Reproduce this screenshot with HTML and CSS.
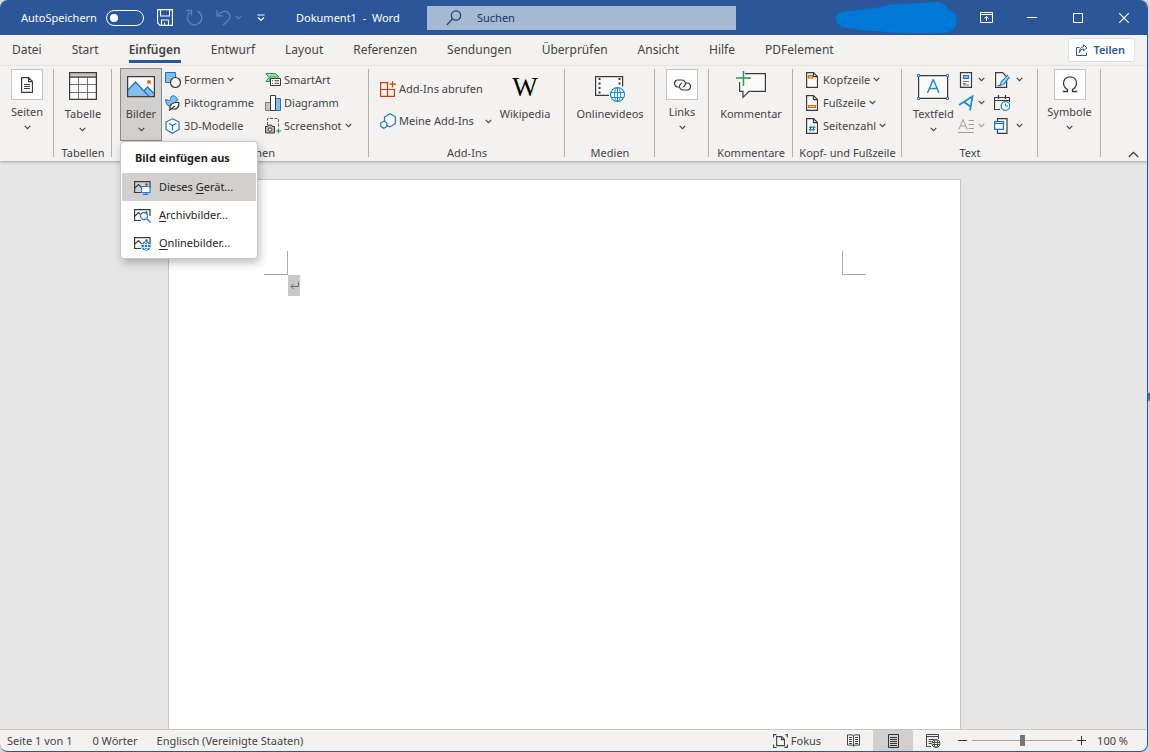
FILE: index.html
```html
<!DOCTYPE html>
<html lang="de">
<head>
<meta charset="utf-8">
<title>Dokument1 - Word</title>
<link rel="stylesheet" href="styles.css">
</head>
<body>
<svg class="defs" aria-hidden="true">
  <symbol id="chev" viewBox="0 0 7 5"><path d="M.7 .9 3.500 3.600 6.300 .9" fill="none" stroke="currentColor" stroke-width="1.200"/></symbol>
  <symbol id="doc" viewBox="0 0 12 16"><path d="M.6 .6h6.900l4 4v10.800H.6z" fill="#fafafa" stroke="#3b3a39" stroke-width="1.200"/><path d="M7.500 .6v4h4" fill="none" stroke="#3b3a39" stroke-width="1.200"/></symbol>
  <symbol id="thumb" viewBox="0 0 17 15"><path d="M7 12.500H.6V1.600h15.400V8" fill="none" stroke="#3b3a39" stroke-width="1.200"/><path d="M.8 8 4.500 4.500 7.500 7.500" fill="none" stroke="#3b3a39" stroke-width="1.200"/><path d="M11.500 3.500h2v2h-2z" fill="#3b3a39"/></symbol>
</svg>
<div class="window">
  <header class="titlebar">
    <div class="quick">
      <label class="autosave" for="autosave">AutoSpeichern</label>
      <input class="switch" id="autosave" type="checkbox" role="switch">
      <button class="bare save" aria-label="Speichern"><svg width="16" height="17" viewBox="0 0 16 17" fill="none" stroke="#fff" stroke-width="1.100"><path d="M.6 .6h14.800v15.800H3L.6 14z"/><path d="M3.500 .6v6.400h9V.6M4.500 16v-5h7v5M7.500 16v-2.500"/></svg></button>
      <button class="bare redo" aria-label="Wiederholen"><svg width="17" height="17" viewBox="0 0 17 17" fill="none" stroke="#5f83bd" stroke-width="1.300"><path d="M11.500 2.200a7.200 7.200 0 1 1-7.500 1"/><path d="M.5 1.500h5v5"/></svg></button>
      <button class="bare undo" aria-label="Rückgängig"><svg width="15" height="17" viewBox="0 0 15 17" fill="none" stroke="#5f83bd" stroke-width="1.300"><path d="M1 .8v6h6"/><path d="M1.500 6.500C5 2 9.500 1.500 12 3.500c3 2.500 2.500 6 0 8L7 16.300"/></svg><svg class="pale" width="7" height="5"><use href="#chev"/></svg></button>
      <button class="bare custom" aria-label="Schnellzugriff anpassen"><svg width="8" height="8" viewBox="0 0 8 8" fill="none" stroke="#fff" stroke-width="1.200"><path d="M.5 1h7M1 3.500l3 3 3-3"/></svg></button>
      <span class="doctitle">Dokument1&nbsp; -&nbsp; Word</span>
    </div>
    <label class="search"><svg width="16" height="16" viewBox="0 0 16 16" fill="none" stroke="#1f3f7a" stroke-width="1.200"><circle cx="10" cy="5.500" r="4.700"/><path d="M6.500 9 .8 15"/></svg><input type="text" placeholder="Suchen" aria-label="Suchen"></label>
    <div class="account">
      <svg class="blob" width="124" height="32" viewBox="0 0 124 32"><path d="M8 10Q22 8 42 6 54 2 72 2L98 0Q112-1 114 8 123 10 123 18 122 31 108 31H78Q55 31 45 29 24 29 19 26C2 28-4 14 8 10Z" fill="#0078d7"/></svg>
      <div class="sys">
        <button class="bare" aria-label="Menüband-Anzeigeoptionen"><svg width="13" height="11" viewBox="0 0 13 11" fill="none" stroke="#fff"><path d="M.5 .5h12v10H.5zM.5 2.500h12M6.500 9V4.500M4.500 6.500l2-2 2 2"/></svg></button>
        <button class="bare" aria-label="Minimieren"><svg width="10" height="10" viewBox="0 0 10 10" stroke="#fff"><path d="M0 4.500h10"/></svg></button>
        <button class="bare" aria-label="Maximieren"><svg width="10" height="10" viewBox="0 0 10 10" stroke="#fff" fill="none"><path d="M.5 .5h9v9h-9z"/></svg></button>
        <button class="bare" aria-label="Schließen"><svg width="10" height="10" viewBox="0 0 10 10" stroke="#fff" stroke-width="1.100"><path d="M.3 .3l9.400 9.400M9.700 .3.3 9.700"/></svg></button>
      </div>
    </div>
  </header>

  <nav class="tabs">
    <button class="tab">Datei</button><button class="tab">Start</button><button class="tab active">Einfügen</button><button class="tab">Entwurf</button><button class="tab">Layout</button><button class="tab">Referenzen</button><button class="tab">Sendungen</button><button class="tab">Überprüfen</button><button class="tab">Ansicht</button><button class="tab">Hilfe</button><button class="tab">PDFelement</button>
    <button class="share"><svg width="12" height="12" viewBox="0 0 12 12" fill="none" stroke="#2b579a"><path d="M3.500 3.500H.5v8h10v-3"/><path d="M7.500 .8l3.500 3-3.500 3V5C5 5 4 6.500 3.500 8.500 3.300 5 5 2.800 7.500 2.800z"/></svg>Teilen</button>
  </nav>

  <section class="ribbon">
    <div class="group g-pages">
      <div class="tools">
        <button class="big boxed"><span class="box"><svg width="12" height="16" viewBox="0 0 12 16" fill="none" stroke="#3b3a39" stroke-width="1.200"><path d="M.6 .6h6.900l4 4v10.800H.6zM7.500 .6v4h4M3 7.500h6M3 9.500h6M3 11.500h6"/></svg></span>Seiten<svg class="chev" width="7" height="5"><use href="#chev"/></svg></button>
      </div>
    </div>
    <div class="group g-tables">
      <div class="tools">
        <button class="big"><svg class="pic" width="28" height="28" viewBox="0 0 28 28"><path d="M.5 .5h27v27H.5z" fill="#fafafa"/><path d="M1 1h26v4H1z" fill="#c8c6c4"/><path d="M1 12.500h26M1 20.500h26M9.500 5v22M18.500 5v22" stroke="#797775"/><path d="M.6 .6h26.800v26.800H.6zM1 5.200h26" fill="none" stroke="#3b3a39" stroke-width="1.200"/></svg>Tabelle<svg class="chev" width="7" height="5"><use href="#chev"/></svg></button>
      </div>
      <div class="caption">Tabellen</div>
    </div>
    <div class="group g-illus">
      <div class="tools">
        <div class="dropdown">
          <button class="big pressed" aria-expanded="true"><svg class="pic" width="28" height="28" viewBox="0 0 28 28"><path d="M.6 4.600h26.800v20H.6z" fill="#fafafa"/><path d="M1 18l7.500-8L17 19l3-4 7 7v2.500H1z" fill="#83beec"/><path d="M1 18 8.500 10 22 24.500M17 19l3.500-4L27 21.500" fill="none" stroke="#1e74bd" stroke-width="1.200"/><path d="M.6 4.600h26.800v20H.6z" fill="none" stroke="#3b3a39" stroke-width="1.200"/><circle cx="22" cy="10" r="2" fill="#e06c00"/></svg>Bilder<svg class="chev" width="7" height="5"><use href="#chev"/></svg></button>
          <div class="menu" role="menu">
            <div class="menu-title">Bild einfügen aus</div>
            <button class="item hover" role="menuitem"><svg width="17" height="15" viewBox="0 0 17 15"><use href="#thumb" width="17" height="15"/><path d="M7.500 6.500h8.500v6H7.500z" fill="#fff" stroke="#1e7fd0" stroke-width="1.200"/><path d="M11.700 12.500v2M9 14.400h5.500" stroke="#1e7fd0" stroke-width="1.200"/></svg><span>Dieses <u>G</u>erät...</span></button>
            <button class="item" role="menuitem"><svg width="17" height="15" viewBox="0 0 17 15"><use href="#thumb" width="17" height="15"/><circle cx="10" cy="8" r="3.500" fill="#fff" stroke="#1e7fd0" stroke-width="1.300"/><path d="M12.500 10.500l4 4" stroke="#1e7fd0" stroke-width="1.400"/></svg><span><u>A</u>rchivbilder...</span></button>
            <button class="item" role="menuitem"><svg width="17" height="15" viewBox="0 0 17 15"><use href="#thumb" width="17" height="15"/><circle cx="12" cy="10" r="4.700" fill="#1e7fd0"/><path d="M8 8.500h8M8 11.500h8" stroke="#fff" stroke-width=".8"/><ellipse cx="12" cy="10" rx="1.700" ry="4" fill="none" stroke="#fff" stroke-width=".8"/></svg><span><u>O</u>nlinebilder...</span></button>
          </div>
        </div>
        <div class="stack">
          <button class="small"><svg width="16" height="16" viewBox="0 0 16 16"><path d="M.5 .5h10v10H.5z" fill="#83beec" stroke="#1e74bd"/><circle cx="10.500" cy="10.500" r="5" fill="#fafafa" stroke="#3b3a39" stroke-width="1.200"/></svg>Formen<svg class="chev" width="7" height="5"><use href="#chev"/></svg></button>
          <button class="small"><svg width="16" height="16" viewBox="0 0 16 16"><path d="M.6 4.500 4 5.500C5.500 5.500 6 4 5.500 3 6 1 8 .4 9.500 1c1.500.5 2 1.700 1.800 2.700l1.900 1-2 .9C11 8 9.500 9 7 9L4 11C2 10.500 .8 8 .6 4.500z" fill="#83beec" stroke="#1e74bd"/><path d="M5 14c-1-4.500 3-7 8.800-6.500C14.500 12 11.500 15.500 6.500 13.500M4 15.500l6-4.500" fill="#fafafa" stroke="#3b3a39" stroke-width="1.200"/></svg>Piktogramme</button>
          <button class="small"><svg width="16" height="16" viewBox="0 0 16 16" fill="#fff" stroke="#1e74bd" stroke-width="1.200"><path d="M7.500 .8 14 4v7.500l-6.500 3.700L1 11.500V4z"/><path d="M4 5.500 7.500 7.500 11.500 5.300M7.500 7.500v5" fill="none"/></svg>3D-Modelle</button>
        </div>
        <div class="stack stack-b">
          <button class="small"><svg width="16" height="16" viewBox="0 0 16 16"><path d="M.8 1.500h9.700L14 5H5v4.500H.8L4 5.500z" fill="#9fd8ac" stroke="#259b48"/><path d="M5.500 6.500h10v7h-10z" fill="#fff" stroke="#3b3a39"/><path d="M7 8.800h1M9.500 8.800h4.500M7 11.300h1M9.500 11.300h4.500" stroke="#3b3a39"/></svg>SmartArt</button>
          <button class="small"><svg width="16" height="16" viewBox="0 0 16 16"><path d="M.5 7.500h5v8h-5z" fill="#c8c6c4" stroke="#797775"/><path d="M10.500 3.500h5v12h-5z" fill="#83beec" stroke="#1e74bd"/><path d="M5.500 .5h5v15h-5z" fill="#fff" stroke="#3b3a39"/></svg>Diagramm</button>
          <button class="small"><svg width="16" height="16" viewBox="0 0 16 16"><path d="M2.500 7V.5h11v9" fill="none" stroke="#605e5c" stroke-dasharray="3 1.500"/><path d="M.5 8.500h2l1-1.500h3l1 1.500h2v6.500h-9z" fill="#b5b3b1" stroke="#3b3a39"/><circle cx="5" cy="11.600" r="1.700" fill="#fff" stroke="#3b3a39"/><path d="M13.500 10.500v5M11 13h5" stroke="#259b48" stroke-width="1.200"/></svg>Screenshot<svg class="chev" width="7" height="5"><use href="#chev"/></svg></button>
        </div>
      </div>
      <div class="caption">Illustrationen</div>
    </div>
    <div class="group g-addins">
      <div class="tools">
        <div class="stack tall">
          <button class="small"><svg width="16" height="16" viewBox="0 0 16 16" fill="none" stroke="#d83b01" stroke-width="1.200"><path d="M8.500 1.600H.6v13.800h13.800V8.500H.6M7.500 1.600v13.800M12.500 .2v6M9.500 3.200h6.500"/></svg>Add-Ins abrufen</button>
          <button class="small"><svg width="16" height="16" viewBox="0 0 16 16" fill="#fafafa" stroke="#1e74bd" stroke-width="1.200"><path d="M4.500 8V4L10 .8l5.300 3v6.900l-5.500 3.200L7 12.500"/><path d="M3.800 8.300l3 1.500v3.700l-3 1.700-3-1.700V9.800z"/></svg>Meine Add-Ins<svg class="chev far" width="7" height="5"><use href="#chev"/></svg></button>
        </div>
        <button class="big wiki"><span class="w pic">W</span>Wikipedia</button>
      </div>
      <div class="caption">Add-Ins</div>
    </div>
    <div class="group g-media">
      <div class="tools">
        <button class="big"><svg class="pic" width="30" height="28" viewBox="0 0 30 28"><path d="M.6 4.600h27v19H.6z" fill="#fafafa"/><path d="M14 23.400H.6V4.600h27v10" fill="none" stroke="#3b3a39" stroke-width="1.200"/><path d="M4.500 6v17M24.500 6v8" stroke="#3b3a39" stroke-width="2" stroke-dasharray="2 2.500"/><circle cx="22.500" cy="22.500" r="7" fill="#fff" stroke="#1e8ad6" stroke-width="1.200"/><ellipse cx="22.500" cy="22.500" rx="3" ry="7" fill="none" stroke="#1e8ad6"/><path d="M16 20.500h13M16 25.500h13M22.500 15.500v14" stroke="#1e8ad6"/></svg>Onlinevideos</button>
      </div>
      <div class="caption">Medien</div>
    </div>
    <div class="group g-links">
      <div class="tools">
        <button class="big boxed"><span class="box"><svg width="17" height="12" viewBox="0 0 17 12" fill="none" stroke="#3b3a39" stroke-width="1.200"><path d="M5.500 8H4a3.500 3.500 0 0 1 0-7H8a3.500 3.500 0 0 1 3 5.200Q10 8 8.500 8"/><path d="M11.500 4H13a3.500 3.500 0 0 1 0 7H9a3.500 3.500 0 0 1-3-5.200Q7 4 8.500 4"/></svg></span>Links<svg class="chev" width="7" height="5"><use href="#chev"/></svg></button>
      </div>
    </div>
    <div class="group g-comments">
      <div class="tools">
        <button class="big"><svg class="pic" width="32" height="28" viewBox="0 0 32 28"><path d="M4.600 10V19.400H8v6l6-6h16.400V1.600H10" fill="#fafafa" stroke="#3b3a39" stroke-width="1.200"/><path d="M8.500-1v15M1 6h15" stroke="#259b48" stroke-width="1.500"/></svg>Kommentar</button>
      </div>
      <div class="caption">Kommentare</div>
    </div>
    <div class="group g-header">
      <div class="tools">
        <div class="stack">
          <button class="small"><svg class="sheet" width="12" height="16" viewBox="0 0 12 16"><use href="#doc"/><path d="M2.500 3.500h4v2.500h-4z" fill="#fbd3a5" stroke="#e06c00" stroke-width="1.200"/></svg>Kopfzeile<svg class="chev" width="7" height="5"><use href="#chev"/></svg></button>
          <button class="small"><svg class="sheet" width="12" height="16" viewBox="0 0 12 16"><use href="#doc"/><path d="M2.500 10.500h7v2h-7z" fill="#fbd3a5" stroke="#e06c00" stroke-width="1.200"/></svg>Fußzeile<svg class="chev" width="7" height="5"><use href="#chev"/></svg></button>
          <button class="small"><svg class="sheet" width="12" height="16" viewBox="0 0 12 16"><use href="#doc"/><path d="M5 7.500 4 13.500M8 7.500l-1 6M3 9.300h6.500M2.700 11.700h6.500" stroke="#1e74bd"/></svg>Seitenzahl<svg class="chev" width="7" height="5"><use href="#chev"/></svg></button>
        </div>
      </div>
      <div class="caption">Kopf- und Fußzeile</div>
    </div>
    <div class="group g-text">
      <div class="tools">
        <button class="big"><svg class="pic" width="32" height="28" viewBox="0 0 32 28"><path d="M1.600 3.600h29v22.800h-29z" fill="#fafafa" stroke="#3b3a39" stroke-width="1.200"/><path d="M10.500 21 16 8h.5L22 21M12.500 16.500h7.500" fill="none" stroke="#1e8ad6" stroke-width="1.500"/><path d="M.5 2.500h2v2h-2zM29.500 2.500h2v2h-2zM.5 25.500h2v2h-2zM29.500 25.500h2v2h-2z" fill="#fff" stroke="#1e74bd"/></svg>Textfeld<svg class="chev" width="7" height="5"><use href="#chev"/></svg></button>
        <div class="stack icons">
          <button class="small" aria-label="Schnellbausteine"><svg width="16" height="16" viewBox="0 0 16 16"><path d="M2.500 .6h11v14.800h-11z" fill="#fafafa" stroke="#3b3a39" stroke-width="1.200"/><path d="M5.500 3.500h5v3h-5z" fill="#83beec" stroke="#1e74bd" stroke-width="1.200"/><path d="M5 9.500h6M5 11.500h3M5 13h6" stroke="#797775"/></svg><svg class="chev" width="7" height="5"><use href="#chev"/></svg></button>
          <button class="small" aria-label="WordArt"><svg width="16" height="16" viewBox="0 0 16 16" fill="none" stroke="#1e8ad6" stroke-width="1.700"><path d="M1 10 14.500 1.300 12 15.500M6 7l6.500 4.500"/></svg><svg class="chev" width="7" height="5"><use href="#chev"/></svg></button>
          <button class="small off" aria-label="Initiale" disabled><svg width="16" height="16" viewBox="0 0 16 16" fill="none" stroke="#a19f9d"><path d="M.8 11.500 5 1.500l4.200 10M2.500 8h5M10.500 2.500H16M10.500 6.500H16M10.500 10.500H16M0 14.500h16"/></svg><svg class="chev" width="7" height="5"><use href="#chev"/></svg></button>
        </div>
        <div class="stack icons">
          <button class="small" aria-label="Signaturzeile"><svg width="16" height="16" viewBox="0 0 16 16"><path d="M1.600 .6h7l4 4v10.800h-11z" fill="#fafafa" stroke="#3b3a39" stroke-width="1.200"/><path d="M14 3 7.500 9.500 6 13.500l4-1.500L15.500 5" fill="#b8dcf5" stroke="#1e8ad6" stroke-width="1.300"/><path d="M3.500 13.500h3" stroke="#1e74bd"/></svg><svg class="chev" width="7" height="5"><use href="#chev"/></svg></button>
          <button class="small" aria-label="Datum und Uhrzeit"><svg width="16" height="16" viewBox="0 0 16 16"><path d="M6 14.500H.5v-12h15V7M.5 5.500h15M4.500 0v4M11.500 0v4" fill="none" stroke="#3b3a39" stroke-width="1.200"/><circle cx="11.500" cy="11" r="4.300" fill="#fff" stroke="#1e8ad6" stroke-width="1.300"/><path d="M11.500 8.500V11h2.500" fill="none" stroke="#1e74bd"/></svg></button>
          <button class="small" aria-label="Objekt"><svg width="16" height="16" viewBox="0 0 16 16"><path d="M3.500 3V.6h9.500v14.800H3.500V12" fill="#fafafa" stroke="#3b3a39" stroke-width="1.200"/><path d="M.6 3.600h8.800v7.800H.6z" fill="#fff" stroke="#1e74bd" stroke-width="1.300"/><path d="M1 5.500h8" stroke="#1e74bd"/></svg><svg class="chev" width="7" height="5"><use href="#chev"/></svg></button>
        </div>
      </div>
      <div class="caption">Text</div>
    </div>
    <div class="group g-symbols">
      <div class="tools">
        <button class="big boxed"><span class="box"><svg width="16" height="17" viewBox="0 0 16 17" fill="none" stroke="#3b3a39" stroke-width="1.300"><path d="M.8 15.500h4.700v-2C3 12 1.500 10 1.500 7.200 1.500 3 4.500 .8 8 .8s6.500 2.200 6.500 6.400c0 2.800-1.500 4.800-4 6.300v2h4.700"/></svg></span>Symbole<svg class="chev" width="7" height="5"><use href="#chev"/></svg></button>
      </div>
    </div>
    <button class="bare collapse" aria-label="Menüband reduzieren"><svg width="11" height="7" viewBox="0 0 11 7" fill="none" stroke="#3b3a39" stroke-width="1.200"><path d="M.8 6 5.500 1.300 10.200 6"/></svg></button>
  </section>

  <main class="canvas">
    <article class="page">
      <div class="corners"><span class="corner left"></span><span class="corner right"></span></div>
      <p class="para"><span class="mark"><svg width="9" height="8" viewBox="0 0 9 8" fill="none" stroke="#6e6e6e"><path d="M8.500 0v4.500H1M3.500 2 1 4.500 3.500 7"/></svg></span></p>
    </article>
  </main>

  <footer class="status">
    <span class="st-page">Seite 1 von 1</span><span class="st-words">0 Wörter</span><span>Englisch (Vereinigte Staaten)</span>
    <div class="views">
      <button class="bare focus"><svg width="15" height="14" viewBox="0 0 15 14" fill="none" stroke="#444" stroke-width="1.100"><path d="M3.500 .6H.6v3M.6 10.500v3h2.900M11.500 13.400h2.900v-3M14.400 3.500V.6h-2"/><path d="M3.600 2.600h4.900l3 3v6H3.600zM8.500 2.600v3h3"/></svg>Fokus</button>
      <button class="bare view" aria-label="Lesemodus"><svg width="13" height="13" viewBox="0 0 13 13" fill="none" stroke="#444"><path d="M6.500 2 5.500 .9H.5v10.200h5l1 1.200 1-1.200h5V.9h-5zv10M2 3.500h3M2 5.500h3M2 7.500h3M8 3.500h3M8 5.500h3M8 7.500h3M2 9.500h3M8 9.500h3"/></svg></button>
      <button class="bare view current" aria-label="Seitenlayout"><svg width="11" height="14" viewBox="0 0 11 14" fill="none" stroke="#333"><path d="M.5 .5h10v13H.5zM2 3.500h7M2 5.500h7M2 7.500h7M2 9.500h7M2 11.500h7"/></svg></button>
      <button class="bare view" aria-label="Weblayout"><svg width="15" height="14" viewBox="0 0 15 14" fill="none" stroke="#444"><path d="M5 12.500H.5V.5h12V5M.5 2.500h12M2.500 5.500h6M2.500 7.500h3M2.500 9.500h3"/><circle cx="10" cy="9.500" r="4" fill="#fff"/><ellipse cx="10" cy="9.500" rx="1.700" ry="4"/><path d="M6 8.500h8M6 10.500h8"/></svg></button>
      <button class="bare step" aria-label="Verkleinern"><svg width="9" height="9" viewBox="0 0 9 9" stroke="#333"><path d="M0 4.500h9"/></svg></button>
      <input class="zoom" type="range" min="0" max="100" value="50" aria-label="Zoom">
      <button class="bare step" aria-label="Vergrößern"><svg width="9" height="9" viewBox="0 0 9 9" stroke="#333"><path d="M0 4.500h9M4.500 0v9"/></svg></button>
      <span class="percent">100 %</span>
    </div>
  </footer>
</div>
</body>
</html>
```
FILE: styles.css
```css
* { box-sizing: border-box; }
html, body { height: 100%; }
body {
  margin: 0;
  padding-right: 2px;
  background: linear-gradient(#0f6bd0, #2b88e8) right 0 top 393px / 2px 8px no-repeat, #d7d6dc;
  font: 11px/16px "Noto Sans", "Open Sans", sans-serif;
  color: #444;
}
button, input { font: inherit; color: inherit; }
button { padding: 0; border: 0; background: none; white-space: nowrap; }
svg { display: block; flex: none; }
.defs { position: absolute; width: 0; height: 0; }
.bare { display: flex; align-items: center; justify-content: center; }

.window {
  display: flex;
  flex-direction: column;
  height: 100%;
  overflow: hidden;
  border: solid #2b579a;
  border-width: 0 1px 1px 0;
  border-radius: 8px;
  background: #f3f2f1;
}

/* Title bar */
.titlebar { display: flex; height: 35px; flex: none; background: #2b579a; color: #fff; }
.quick { display: flex; align-items: center; width: 427px; padding-left: 21px; white-space: nowrap; }
.autosave { width: 85px; }
.switch {
  appearance: none;
  display: flex;
  align-items: center;
  width: 38px;
  height: 16px;
  margin: 0 13px 0 0;
  padding-left: 3px;
  border: 1px solid #fff;
  border-radius: 8px;
}
.switch::before { content: ""; width: 8px; height: 8px; border-radius: 50%; background: #fff; }
.save { margin-right: 13px; }
.redo { margin-right: 13px; }
.undo { gap: 4px; margin-right: 15px; }
.pale { color: #5f83bd; }
.custom { margin-right: 31px; }
.search { display: flex; align-items: center; gap: 15px; width: 309px; height: 24px; margin-top: 6px; padding-left: 19px; background: #a6b9d3; color: #16356e; }
.search input { flex: 1; min-width: 0; padding: 0; border: 0; outline: 0; background: none; }
.search input::placeholder { color: #16356e; opacity: 1; }
.account { display: flex; flex: 1; align-items: center; justify-content: flex-end; gap: 5px; }
.sys { display: flex; height: 100%; }
.sys button { width: 46px; }

/* Tabs */
.tabs { display: flex; flex: none; gap: 30px; height: 31px; padding: 0 12px; align-items: flex-start; font-size: 12px; }
.tab { height: 28px; padding-top: 4px; border-bottom: 3px solid transparent; }
.tab.active { border-color: #2b579a; font-weight: 600; }
.share { display: flex; align-items: center; gap: 5px; height: 24px; margin: 3px 0 0 auto; padding: 0 9px 0 7px; border: 1px solid #e1dfdd; border-radius: 2px; background: #fff; color: #2b579a; font-weight: 600; font-size: 11px; }

/* Ribbon */
.ribbon { position: relative; z-index: 1; display: flex; flex: none; padding-top: 2px; background: #f3f2f1; box-shadow: 0 1px 3px rgba(0, 0, 0, .3); }
.group { display: flex; flex: none; flex-direction: column; height: 93px; background: linear-gradient(#b3b0ad, #b3b0ad) right 0 top 1px / 1px 88px no-repeat; }
.tools { display: flex; justify-content: center; height: 77px; }
.caption { text-align: center; white-space: nowrap; }
.g-pages { width: 54px; }
.g-tables { width: 58px; }
.g-illus { width: 257px; }
.g-addins { width: 196px; }
.g-media { width: 90px; }
.g-links { width: 54px; }
.g-comments { width: 84px; }
.g-header { width: 109px; }
.g-text { width: 136px; }
.g-symbols { width: 63px; }
.g-illus .tools, .g-addins .tools, .g-header .tools, .g-text .tools { justify-content: flex-start; }
.g-illus .tools { padding-left: 8px; }
.g-addins .tools { padding-left: 11px; }
.g-header .tools { padding-left: 10px; }
.g-text .tools { padding-left: 11px; }

.big { display: flex; flex-direction: column; align-items: center; height: 73px; padding-top: 4px; }
.big .pic { margin-bottom: 6px; overflow: visible; }
.big .chev { margin-top: 5px; }
.boxed { padding-top: 1px; }
.box { display: flex; align-items: center; justify-content: center; width: 32px; height: 31px; margin-bottom: 4px; border: 1px solid #c8c6c4; background: #fff; }
.pressed { width: 42px; padding-top: 3px; border: 1px solid #8a8886; background: #d2d0ce; }
.w { height: 28px; font: 27px/30px "Liberation Serif", serif; color: #000; }
.wiki { margin-left: 8px; }

.stack { display: flex; flex-direction: column; margin-left: 3px; }
.stack-b { margin-left: 11px; }
.small { display: flex; align-items: center; gap: 3px; height: 23px; }
.tall { margin-left: 0; padding-top: 5px; }
.tall .small { height: 32px; }
.far { margin-left: 8px; }
.sheet { margin-right: 2px; }
.icons { margin-left: 4px; }
.icons .small { gap: 4px; }
.icons + .icons { margin-left: 9px; }
.icons + .icons .small { gap: 6px; }
.off { color: #a19f9d; }
.collapse { margin: auto 8px 3px auto; }

/* Menu below the picture button */
.dropdown { position: relative; }
.menu { position: absolute; top: 73px; left: 0; width: 138px; padding: 0 1px 1px; border: 1px solid #c8c6c4; border-radius: 4px; background: #fff; box-shadow: 2px 4px 8px rgba(0, 0, 0, .25); color: #252423; }
.menu-title { padding: 8px 13px 7px; font-weight: 700; white-space: nowrap; }
.item { display: flex; align-items: center; gap: 8px; width: 100%; height: 28px; padding-left: 12px; }
.item.hover { background: #d2d0ce; }
.item u { text-underline-offset: 2px; }

/* Document */
.canvas { display: flex; flex: 1; min-height: 0; justify-content: center; padding: 18px 18px 0 0; background: #e6e6e6; }
.page { width: 793px; padding: 71px 94px 0 95px; border: 1px solid #c6c6c6; border-bottom: 0; background: #fff; }
.corners { display: flex; justify-content: space-between; }
.corner { width: 24px; height: 24px; border-bottom: 1px solid #ababab; }
.corner.left { border-right: 1px solid #ababab; }
.corner.right { border-left: 1px solid #ababab; }
.para { margin: 0 24px; }
.mark { display: flex; align-items: center; justify-content: center; width: 12px; height: 21px; background: #c8c8c8; }

/* Status bar */
.status { display: flex; flex: none; align-items: center; height: 22px; padding-left: 7px; border-top: 1px solid #c8c6c4; white-space: nowrap; }
.st-page { margin-right: 20px; }
.st-words { margin-right: 19px; }
.views { display: flex; align-items: center; height: 100%; margin-left: auto; }
.focus { gap: 3px; margin-right: 12px; }
.view { width: 40px; height: 100%; }
.current { background: #d2d0ce; }
.step { width: 9px; margin: 0 5px; }
.zoom { appearance: none; width: 100px; height: 11px; margin: 0; background: linear-gradient(#a6a6a6, #a6a6a6) center / 100% 1px no-repeat; }
.zoom::-webkit-slider-thumb { appearance: none; width: 5px; height: 11px; background: #777; }
.percent { margin: 0 19px 0 6px; }
```
